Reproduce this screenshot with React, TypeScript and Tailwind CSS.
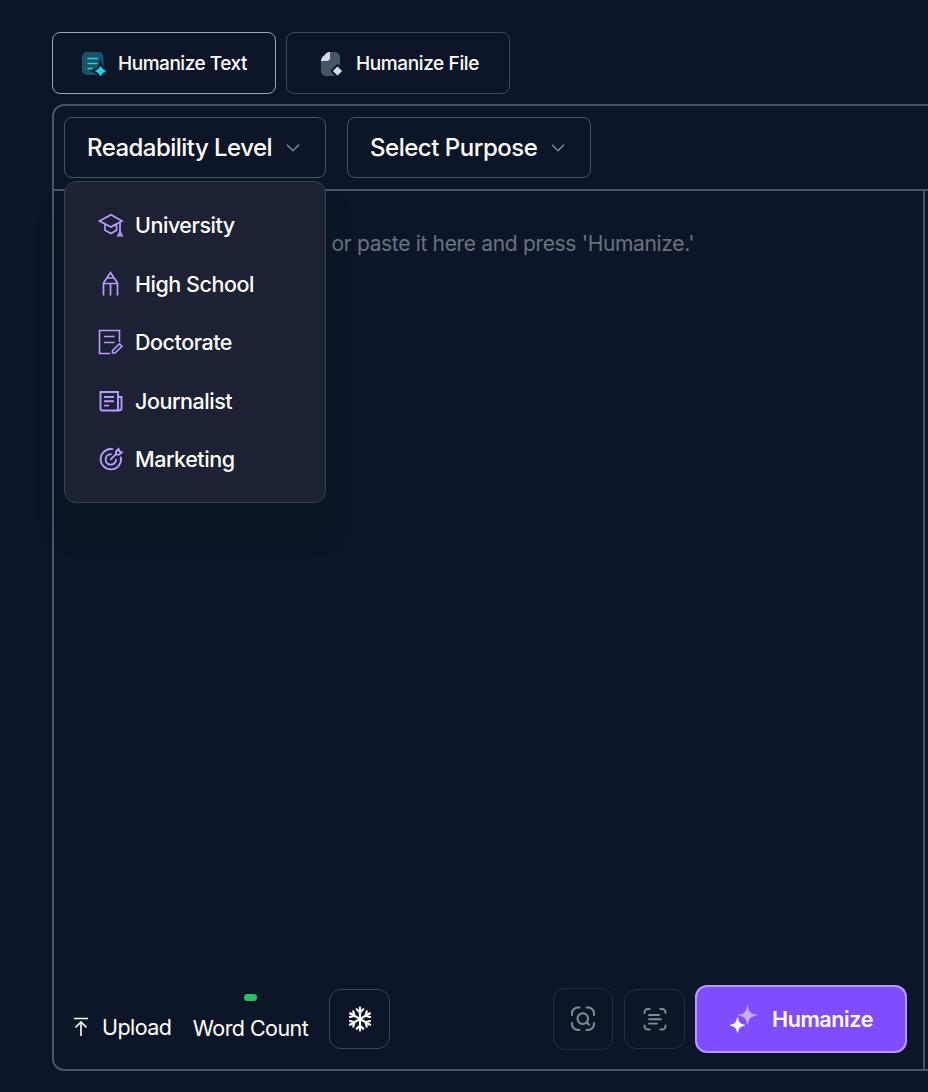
import React, { useState } from 'react';

type IconProps = { className?: string };

type LevelType = {
  name: string;
  Icon: React.FC<IconProps>;
};

const TextTabIcon: React.FC<IconProps> = ({ className }) => (
  <svg className={className} viewBox="0 0 26 26" fill="none">
    <rect x="1" y="1" width="21.5" height="23" rx="5" fill="#1b5367" />
    <path d="M6.5 7.5h10.5M6.5 12.5h10M6.5 17.5h5" stroke="#22d3ee" strokeWidth="1.6" />
    <path
      d="M19.5 13.500Q21 18.500 25.500 20 21 21.500 19.500 26 18 21.500 13.500 20 18 18.500 19.500 13.500z"
      fill="#0d1628"
      stroke="#0d1628"
      strokeWidth="3"
    />
    <path
      d="M19.500 15 21.500 18 24.800 20 21.500 22 19.500 25 17.500 22 14.200 20 17.500 18z"
      fill="#22d3ee"
      stroke="#22d3ee"
      strokeWidth="0.500"
      strokeLinejoin="round"
    />
  </svg>
);

const FileTabIcon: React.FC<IconProps> = ({ className }) => (
  <svg className={className} viewBox="0 0 26 26" fill="none">
    <path d="M10 1h6a5 5 0 0 1 5 5v14a5 5 0 0 1-5 5H7a5 5 0 0 1-5-5V9z" fill="#475569" />
    <path d="M11 1v5.5A3.5 3.5 0 0 1 7.5 10H2C2 8.5 2.5 7 4 5.5l3-3C8.5 1 10 1 11 1z" fill="#d8dbe2" />
    <path
      d="M18.500 14 24.500 20l-6 6-6-6z"
      fill="#d8dbe2"
      stroke="#0d1628"
      strokeWidth="1.800"
      strokeLinejoin="round"
    />
  </svg>
);

const UniversityIcon: React.FC<IconProps> = ({ className }) => (
  <svg className={className} viewBox="0 0 26 26" fill="none" stroke="currentColor" strokeWidth="1.700">
    <path d="M1.500 9 13 2.800 24 9l-11 6z" />
    <path d="M7 12v6.300l6 3.200 5.500-3.200V12M13 15l5.500-3M22 10v9.500" />
    <path d="M22 19.500 20 23.700h4z" />
  </svg>
);

const PencilIcon: React.FC<IconProps> = ({ className }) => (
  <svg className={className} viewBox="0 0 26 26" fill="none" stroke="currentColor" strokeWidth="1.700">
    <path d="M5.500 24.500V12l7-10.500 7 10.500v12.500M5.500 12.500h14M12.500 12.500v12M9.500 7h6" />
  </svg>
);

const DoctorateIcon: React.FC<IconProps> = ({ className }) => (
  <svg className={className} viewBox="0 0 26 26" fill="none" stroke="currentColor" strokeWidth="1.600">
    <path d="M12 24.500H1.500V1.500h20V13M6 7.500h10.500M6 13.500h10.500" />
    <path d="m14.500 21.500 7-6.700 2.500 2.400-7 6.800h-2.500z" />
  </svg>
);

const JournalistIcon: React.FC<IconProps> = ({ className }) => (
  <svg className={className} viewBox="0 0 26 26" fill="none" stroke="currentColor" strokeWidth="1.900">
    <path d="M21.500 22.500H4A1.300 1.300 0 0 1 2.500 21V4H20v16.500M20 9h3.500v11.500c0 2.400-3.500 2.400-3.500 0z" />
    <path d="M6 9h10M6 13.300h10M6 17.600h5" />
  </svg>
);

const MarketingIcon: React.FC<IconProps> = ({ className }) => (
  <svg
    className={className}
    viewBox="0 0 26 26"
    fill="none"
    stroke="currentColor"
    strokeWidth="1.900"
    strokeLinecap="round"
  >
    <path d="M14.500 3.100A10.200 10.200 0 1 0 22.900 11.500" />
    <path d="M12.800 8.200a5.200 5.200 0 1 0 5.200 5.400" />
    <path d="m12.800 13.300 5.200-5.200V5.500L20.500 3l.9 2.500 2.400.8-2.500 2.300h-3" />
  </svg>
);

const ChevronIcon: React.FC<IconProps> = ({ className }) => (
  <svg className={className} viewBox="0 0 14 8" fill="none" stroke="currentColor" strokeWidth="1.600">
    <path d="m1.500 1.200 5.500 5.500 5.500-5.500" strokeLinecap="round" />
  </svg>
);

const UploadIcon: React.FC<IconProps> = ({ className }) => (
  <svg className={className} viewBox="0 0 16 20" fill="none" stroke="currentColor" strokeWidth="1.600">
    <path d="M1 1.500h14M8 19V5M2.500 10.500 8 5l5.500 5.500" />
  </svg>
);

const SnowflakeIcon: React.FC<IconProps> = ({ className }) => (
  <svg
    className={className}
    viewBox="0 0 26 26"
    fill="none"
    stroke="currentColor"
    strokeWidth="2.100"
    strokeLinecap="round"
  >
    {['', 'rotate(60 13 13)', 'rotate(120 13 13)'].map((turn) => (
      <path
        key={turn}
        transform={turn}
        d="M13 1.500v23M9.700 3.300 13 6.600l3.300-3.300M9.700 22.700l3.300-3.300 3.300 3.300"
      />
    ))}
  </svg>
);

const ScanSearchIcon: React.FC<IconProps> = ({ className }) => (
  <svg
    className={className}
    viewBox="0 0 26 26"
    fill="none"
    stroke="currentColor"
    strokeWidth="2"
    strokeLinecap="round"
  >
    <path d="M2 9V7.500a6 6 0 0 1 6-6h1.500M16.500 1.500H18a6 6 0 0 1 6 6V9M24 17v1a6 6 0 0 1-6 6h-1.500M9.500 24H8a6 6 0 0 1-6-6v-1" />
    <circle cx="12.800" cy="12.600" r="5.300" />
    <path d="m16.800 16.500 2.300 2.300" />
  </svg>
);

const ScanTextIcon: React.FC<IconProps> = ({ className }) => (
  <svg
    className={className}
    viewBox="0 0 26 26"
    fill="none"
    stroke="currentColor"
    strokeWidth="1.900"
    strokeLinecap="round"
  >
    <path d="M2.500 7v-.5A3.500 3.500 0 0 1 6 3h1.700M18.300 3H20a3.500 3.500 0 0 1 3.500 3.500V7M23.500 19.500v.5a3.500 3.500 0 0 1-3.500 3.500h-1.700M7.700 23.500H6A3.500 3.500 0 0 1 2.500 20v-.5" />
    <path d="M7 9h10M7 13.300h12M7 17.600h8" />
  </svg>
);

const SparkleIcon: React.FC<IconProps> = ({ className }) => (
  <svg className={className} viewBox="0 0 28 28" fill="currentColor">
    <path
      d="M17.500 0.500c1 6 2.500 8.500 9.500 9.500-7 1.500-8.500 3.500-9.500 9.500-1-6-2.500-8-9.500-9.500 7-1 8.500-3.500 9.500-9.500z"
      opacity="0.550"
      stroke="currentColor"
      strokeWidth="0.600"
    />
    <path
      d="M7.500 12.500c1.200 5 2.300 6.500 7.300 7.700-5 1.300-6.100 2.800-7.300 7.300-1.200-4.500-2.300-6-7.300-7.300 5-1.200 6.100-2.700 7.300-7.700z"
      stroke="currentColor"
      strokeWidth="0.700"
    />
  </svg>
);

const LEVELS: LevelType[] = [
  { name: 'University', Icon: UniversityIcon },
  { name: 'High School', Icon: PencilIcon },
  { name: 'Doctorate', Icon: DoctorateIcon },
  { name: 'Journalist', Icon: JournalistIcon },
  { name: 'Marketing', Icon: MarketingIcon },
];

const App: React.FC = () => {
  const [open, setOpen] = useState(true);
  const [tab, setTab] = useState<'text' | 'file'>('text');

  return (
    <div className="h-[1092px] w-full overflow-hidden bg-[#0d1628] pl-[52px] pt-8 font-['Inter',sans-serif] text-white">
      <div className="flex gap-2.5">
        <button
          type="button"
          onClick={() => setTab('text')}
          className={`flex h-[62px] w-[224px] items-center rounded-lg border pl-7 pt-0.5 text-[19px] font-medium tracking-[-0.46px] ${
            tab === 'text' ? 'border-[#9ca3b4]' : 'border-[#3d495b]'
          }`}
        >
          <TextTabIcon className="mr-[11px] size-[26px]" />
          Humanize Text
        </button>
        <button
          type="button"
          onClick={() => setTab('file')}
          className={`flex h-[62px] w-[224px] items-center rounded-lg border pl-8 pt-0.5 text-[19px] font-medium tracking-[-0.38px] ${
            tab === 'file' ? 'border-[#9ca3b4]' : 'border-[#3d495b]'
          }`}
        >
          <FileTabIcon className="mr-[11px] size-[26px]" />
          Humanize File
        </button>
      </div>

      <div className="mt-2.5 flex h-[967px] w-[920px] flex-col rounded-xl border-2 border-[#475569]">
        <div className="flex h-[85px] shrink-0 gap-[21px] border-b-2 border-[#475569] pl-2.5 pt-[11px]">
          <div className="relative">
            <button
              type="button"
              onClick={() => setOpen(!open)}
              className="flex h-[61px] w-[262px] items-center rounded-lg border border-[#475569] pl-[22px] text-[24px] font-medium tracking-[-0.54px]"
            >
              Readability Level
              <ChevronIcon className="ml-3.5 h-2 w-3.5 text-[#7c8494]" />
            </button>
            {open && (
              <ul className="absolute left-0 top-16 z-10 h-[322px] w-[262px] rounded-xl border border-[#334155] bg-[#1c2133] pt-3.5 shadow-[0_28px_30px_-8px_rgba(10,22,32,0.6)]">
                {LEVELS.map(({ name, Icon }) => (
                  <li
                    key={name}
                    className="flex h-[58.5px] cursor-pointer items-center gap-[11px] pl-[33px] text-[21.5px] font-medium tracking-[-0.46px]"
                    onClick={() => setOpen(false)}
                  >
                    <Icon className="size-[26px] text-[#b79cff]" />
                    {name}
                  </li>
                ))}
              </ul>
            )}
          </div>
          <button
            type="button"
            className="flex h-[61px] w-[244px] items-center rounded-lg border border-[#475569] pl-[22px] text-[24px] font-medium tracking-[-0.47px]"
          >
            Select Purpose
            <ChevronIcon className="ml-3.5 h-2 w-3.5 text-[#7c8494]" />
          </button>
        </div>

        <div className="flex w-[871px] grow flex-col border-r-2 border-[#475569]">
          <p className="grow pl-[277.5px] pt-[37px] text-[21px] leading-8 tracking-[-0.33px] text-[#6b7280]">
            or paste it here and press 'Humanize.'
          </p>
          <div className="flex h-[84px] items-start pl-[19px]">
            <button
              type="button"
              className="mt-[26px] flex w-[98px] items-center text-[21.5px] leading-8 tracking-[-0.55px]"
            >
              <UploadIcon className="mr-[13px] h-5 w-4 shrink-0" />
              Upload
            </button>
            <div className="ml-[22px] mt-[9px] flex w-[115px] flex-col items-center whitespace-nowrap text-[21.5px] tracking-[-0.56px]">
              <span className="h-[7px] w-[13px] rounded-full bg-[#22c55e]" />
              <span className="mt-[11px] leading-8">Word Count</span>
            </div>
            <button
              type="button"
              className="ml-[21px] mt-1 flex h-[60px] w-[61px] items-center justify-center rounded-xl border border-[#3b4759]"
            >
              <SnowflakeIcon className="size-[26px]" />
            </button>
            <div className="ml-auto mr-4 flex items-start">
              <button
                type="button"
                className="mr-[11px] mt-[3px] flex h-[62px] w-[60px] items-center justify-center rounded-xl border border-[#253042] text-[#858b96]"
              >
                <ScanSearchIcon className="size-[26px]" />
              </button>
              <button
                type="button"
                className="mr-2.5 mt-1 flex h-[60px] w-[61px] items-center justify-center rounded-xl border border-[#253042] text-[#858b96]"
              >
                <ScanTextIcon className="size-[26px]" />
              </button>
              <button
                type="button"
                className="flex h-[68px] w-[212px] items-center rounded-xl border-2 border-[#b79cff] bg-[#7f4dff] pl-[33px] text-[21.5px] font-semibold tracking-[-0.4px]"
              >
                <SparkleIcon className="mr-3.5 size-7" />
                Humanize
              </button>
            </div>
          </div>
        </div>
      </div>
    </div>
  );
};

export default App;
